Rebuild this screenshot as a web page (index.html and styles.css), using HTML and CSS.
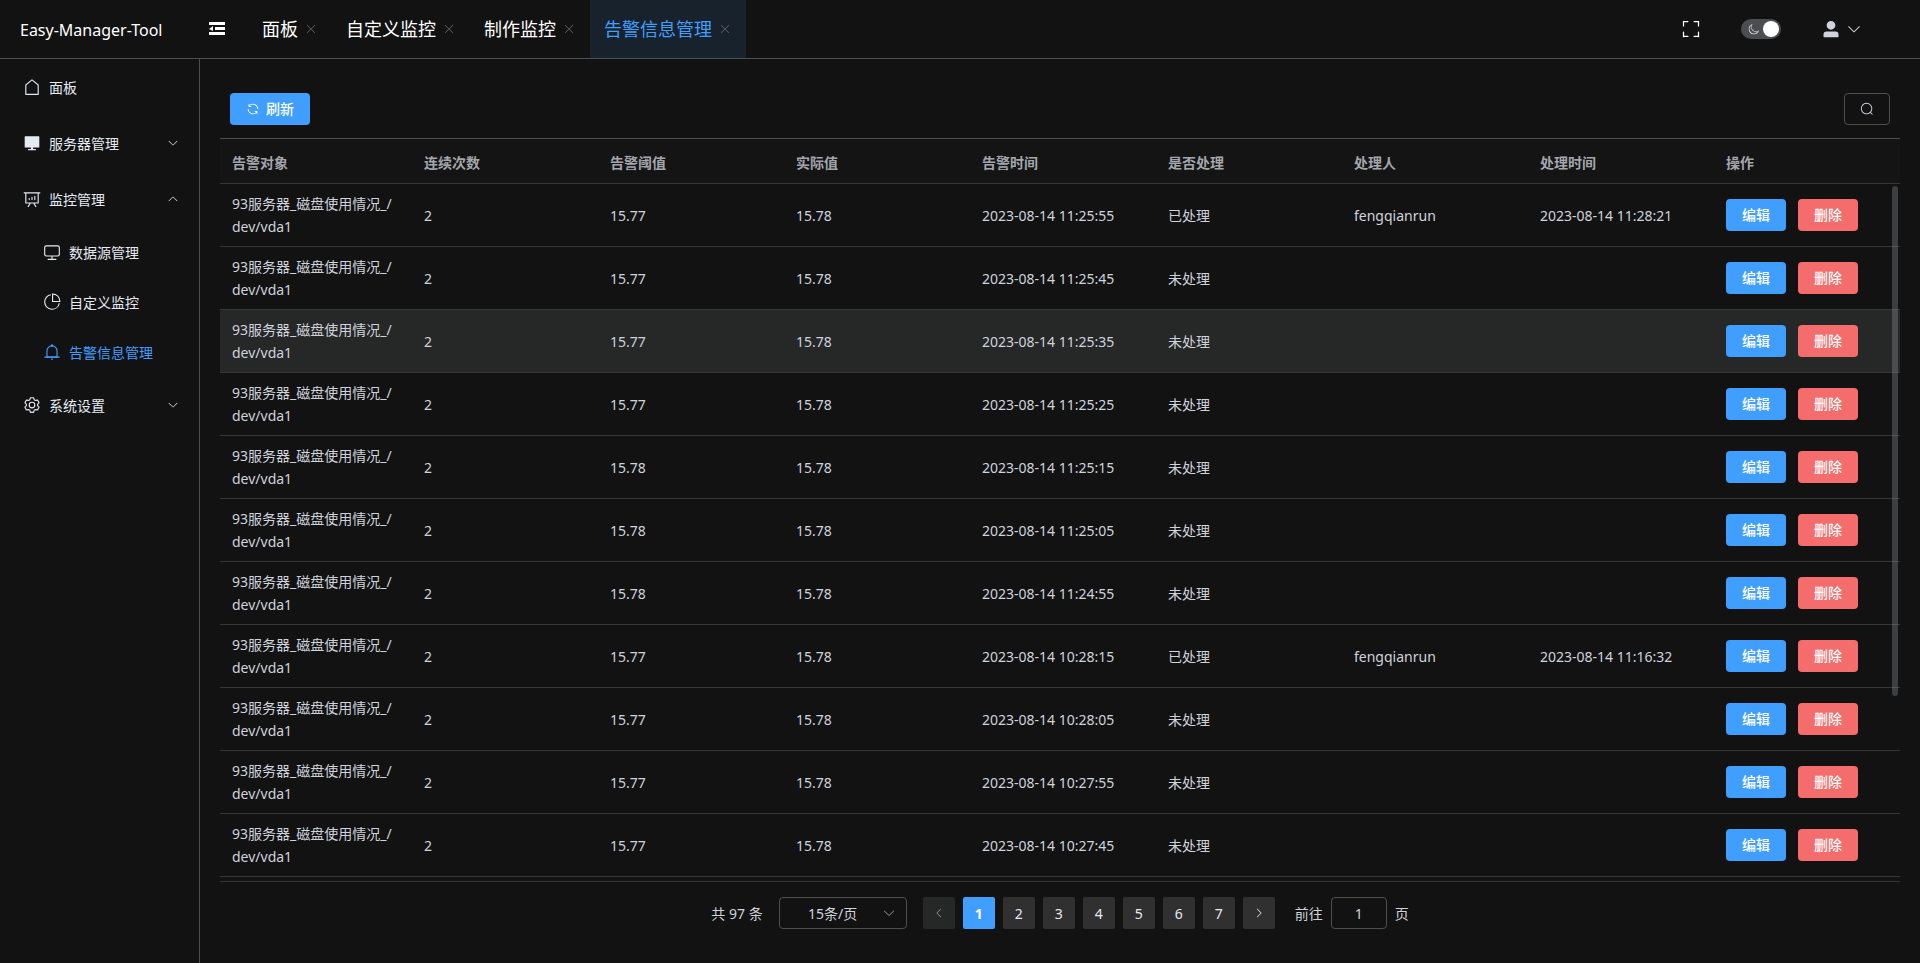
FILE: index.html
```html
<!DOCTYPE html>
<html lang="zh-CN">
<head>
<meta charset="utf-8">
<title>Easy-Manager-Tool</title>
<link rel="stylesheet" href="styles.css">
</head>
<body>
<svg class="sprite" aria-hidden="true">
  <symbol id="i-house" viewBox="0 0 1024 1024"><path d="M192 413.952V896h640V413.952L512 147.328 192 413.952zM139.52 374.4l352-293.312a32 32 0 0 1 40.96 0l352 293.312A32 32 0 0 1 896 398.976V928a32 32 0 0 1-32 32H160a32 32 0 0 1-32-32V398.976a32 32 0 0 1 11.52-24.576z"/></symbol>
  <symbol id="i-server" viewBox="0 0 1024 1024"><path d="M128 128h768a32 32 0 0 1 32 32v576a32 32 0 0 1-32 32H576v80h128a32 32 0 0 1 0 80H320a32 32 0 0 1 0-80h128v-80H128a32 32 0 0 1-32-32V160a32 32 0 0 1 32-32z"/></symbol>
  <symbol id="i-board" viewBox="0 0 1024 1024"><path d="M665.216 768l110.848 192h-73.856L591.36 768H433.024L322.176 960H248.32l110.848-192H160a32 32 0 0 1-32-32V192H64a32 32 0 0 1 0-64h896a32 32 0 1 1 0 64h-64v544a32 32 0 0 1-32 32H665.216zM832 192H192v512h640V192zM352 448a32 32 0 0 1 32 32v64a32 32 0 0 1-64 0v-64a32 32 0 0 1 32-32zm160-64a32 32 0 0 1 32 32v128a32 32 0 0 1-64 0V416a32 32 0 0 1 32-32zm160-64a32 32 0 0 1 32 32v192a32 32 0 1 1-64 0V352a32 32 0 0 1 32-32z"/></symbol>
  <symbol id="i-monitor" viewBox="0 0 1024 1024"><path d="M544 768v128h192a32 32 0 1 1 0 64H288a32 32 0 1 1 0-64h192V768H192A128 128 0 0 1 64 640V256a128 128 0 0 1 128-128h640a128 128 0 0 1 128 128v384a128 128 0 0 1-128 128H544zM192 192a64 64 0 0 0-64 64v384a64 64 0 0 0 64 64h640a64 64 0 0 0 64-64V256a64 64 0 0 0-64-64H192z"/></symbol>
  <symbol id="i-pie" viewBox="0 0 1024 1024"><path d="M448 68.48v64.832A384.128 384.128 0 0 0 512 896a384.128 384.128 0 0 0 378.688-320h64.768A448.128 448.128 0 0 1 64 512 448.128 448.128 0 0 1 448 68.48z"/><path d="M576 97.28V448h350.72A384.064 384.064 0 0 0 576 97.28zM512 64V33.152A448 448 0 0 1 990.848 512H512V64z"/></symbol>
  <symbol id="i-bell" viewBox="0 0 1024 1024"><path d="M512 64a64 64 0 0 1 64 64v64H448v-64a64 64 0 0 1 64-64z"/><path d="M256 768h512V448a256 256 0 1 0-512 0v320zm256-640a320 320 0 0 1 320 320v384H192V448a320 320 0 0 1 320-320z"/><path d="M96 768h832q32 0 32 32t-32 32H96q-32 0-32-32t32-32zm352 128h128a64 64 0 0 1-128 0z"/></symbol>
  <symbol id="i-setting" viewBox="0 0 1024 1024"><path d="M600.704 64a32 32 0 0 1 30.464 22.208l35.2 109.376c14.784 7.232 28.928 15.36 42.432 24.512l112.384-24.192a32 32 0 0 1 34.432 15.36L944.32 364.8a32 32 0 0 1-4.032 37.504l-77.12 85.12a357.12 357.12 0 0 1 0 49.024l77.12 85.248a32 32 0 0 1 4.032 37.504l-88.704 153.6a32 32 0 0 1-34.432 15.296L708.8 803.904c-13.44 9.088-27.648 17.28-42.368 24.512l-35.264 109.376A32 32 0 0 1 600.704 960H423.296a32 32 0 0 1-30.464-22.208L357.696 828.48a351.616 351.616 0 0 1-42.56-24.64l-112.32 24.256a32 32 0 0 1-34.432-15.36L79.68 659.2a32 32 0 0 1 4.032-37.504l77.12-85.248a357.12 357.12 0 0 1 0-48.896l-77.12-85.248A32 32 0 0 1 79.68 364.8l88.704-153.6a32 32 0 0 1 34.432-15.296l112.32 24.256c13.568-9.152 27.776-17.408 42.56-24.64l35.2-109.312A32 32 0 0 1 423.232 64H600.64zm-23.424 64H446.72l-36.352 113.088-24.512 11.968a294.113 294.113 0 0 0-34.816 20.096l-22.656 15.36-116.224-25.088-65.28 113.152 79.68 88.192-1.92 27.136a293.12 293.12 0 0 0 0 40.192l1.92 27.136-79.808 88.192 65.344 113.152 116.224-25.024 22.656 15.296a294.113 294.113 0 0 0 34.816 20.096l24.512 11.968L446.72 896h130.688l36.48-113.152 24.448-11.904a288.282 288.282 0 0 0 34.752-20.096l22.592-15.296 116.288 25.024 65.28-113.152-79.744-88.192 1.92-27.136a293.12 293.12 0 0 0 0-40.256l-1.92-27.136 79.808-88.128-65.344-113.152-116.288 24.96-22.592-15.232a287.616 287.616 0 0 0-34.752-20.096l-24.448-11.904L577.344 128zM512 320a192 192 0 1 1 0 384 192 192 0 0 1 0-384zm0 64a128 128 0 1 0 0 256 128 128 0 0 0 0-256z"/></symbol>
  <symbol id="i-down" viewBox="0 0 1024 1024"><path d="M831.872 340.864 512 652.672 192.128 340.864a30.592 30.592 0 0 0-42.752 0 29.12 29.12 0 0 0 0 41.6L489.664 714.24a32 32 0 0 0 44.672 0l340.288-331.712a29.12 29.12 0 0 0 0-41.728 30.592 30.592 0 0 0-42.752 0z"/></symbol>
  <symbol id="i-close" viewBox="0 0 1024 1024"><path d="M764.288 214.592 512 466.88 259.712 214.592a31.936 31.936 0 0 0-45.12 45.12L466.752 512 214.528 764.224a31.936 31.936 0 1 0 45.12 45.184L512 557.184l252.288 252.288a31.936 31.936 0 0 0 45.12-45.12L557.12 512.064l252.288-252.352a31.936 31.936 0 1 0-45.12-45.184z"/></symbol>
  <symbol id="i-refresh" viewBox="0 0 1024 1024"><path d="M771.776 794.88A384 384 0 0 1 128 512h64a320 320 0 0 0 555.712 216.448H654.72a32 32 0 1 1 0-64h149.056a32 32 0 0 1 32 32v148.928a32 32 0 1 1-64 0v-50.56zM276.288 295.616h92.992a32 32 0 0 1 0 64H220.16a32 32 0 0 1-32-32V178.56a32 32 0 0 1 64 0v50.56A384 384 0 0 1 896.128 512h-64a320 320 0 0 0-555.776-216.384z"/></symbol>
  <symbol id="i-search" viewBox="0 0 1024 1024"><path d="m795.904 750.72 124.992 124.928a32 32 0 0 1-45.248 45.248L750.656 795.904a416 416 0 1 1 45.248-45.248zM480 832a352 352 0 1 0 0-704 352 352 0 0 0 0 704z"/></symbol>
  <symbol id="i-full" viewBox="0 0 1024 1024"><path d="m160 96.064 192 .192a32 32 0 0 1 0 64l-192-.192V352a32 32 0 0 1-64 0V96h64v.064zm0 831.872V928H96V672a32 32 0 1 1 64 0v191.936l192-.192a32 32 0 1 1 0 64l-192 .192zM864 96.064V96h64v256a32 32 0 1 1-64 0V160.064l-192 .192a32 32 0 1 1 0-64l192-.192zm0 831.872-192-.192a32 32 0 0 1 0-64l192 .192V672a32 32 0 1 1 64 0v256h-64v-.064z"/></symbol>
  <symbol id="i-moon" viewBox="0 0 1024 1024"><path d="M240.448 240.448a384 384 0 1 0 559.424 525.696 448 448 0 0 1-542.016-542.08 390.592 390.592 0 0 0-17.408 16.384zm181.056 362.048a384 384 0 0 0 525.632 16.384A448 448 0 1 1 405.056 76.8a384 384 0 0 0 16.448 525.696z"/></symbol>
  <symbol id="i-user" viewBox="0 0 1024 1024"><path d="M288 320a224 224 0 1 0 448 0 224 224 0 1 0-448 0zm544 608H160a32 32 0 0 1-32-32v-96a160 160 0 0 1 160-160h448a160 160 0 0 1 160 160v96a32 32 0 0 1-32 32z"/></symbol>
  <symbol id="i-fold" viewBox="0 0 16 16"><path d="M0 1h16v3H0zM6 6h10v3H6zM0 11h16v3H0zM0 8l4-3v5z"/></symbol>
</svg>

<header class="topbar">
  <h1 class="brand">Easy-Manager-Tool</h1>
  <button class="icon-btn fold" aria-label="折叠菜单"><svg class="s16"><use href="#i-fold"/></svg></button>
  <nav class="tabs">
    <div class="tab"><a href="#">面板</a><button class="icon-btn close" aria-label="关闭"><svg class="s14"><use href="#i-close"/></svg></button></div>
    <div class="tab"><a href="#">自定义监控</a><button class="icon-btn close" aria-label="关闭"><svg class="s14"><use href="#i-close"/></svg></button></div>
    <div class="tab"><a href="#">制作监控</a><button class="icon-btn close" aria-label="关闭"><svg class="s14"><use href="#i-close"/></svg></button></div>
    <div class="tab active"><a href="#">告警信息管理</a><button class="icon-btn close" aria-label="关闭"><svg class="s14"><use href="#i-close"/></svg></button></div>
  </nav>
  <div class="tools">
    <button class="icon-btn bright" aria-label="全屏"><svg class="s20"><use href="#i-full"/></svg></button>
    <label class="switch"><input type="checkbox" role="switch" aria-label="深色模式" checked><svg class="s12"><use href="#i-moon"/></svg></label>
    <button class="icon-btn user" aria-label="用户"><svg class="s20"><use href="#i-user"/></svg><svg class="s16"><use href="#i-down"/></svg></button>
  </div>
</header>

<div class="layout">
  <nav class="sidebar">
    <a class="item" href="#"><svg class="s18"><use href="#i-house"/></svg>面板</a>
    <button class="item"><svg class="s18"><use href="#i-server"/></svg>服务器管理<svg class="s12 arrow"><use href="#i-down"/></svg></button>
    <button class="item"><svg class="s18"><use href="#i-board"/></svg>监控管理<svg class="s12 arrow up"><use href="#i-down"/></svg></button>
    <a class="item sub" href="#"><svg class="s18"><use href="#i-monitor"/></svg>数据源管理</a>
    <a class="item sub" href="#"><svg class="s18"><use href="#i-pie"/></svg>自定义监控</a>
    <a class="item sub current" href="#"><svg class="s18"><use href="#i-bell"/></svg>告警信息管理</a>
    <button class="item"><svg class="s18"><use href="#i-setting"/></svg>系统设置<svg class="s12 arrow"><use href="#i-down"/></svg></button>
  </nav>

  <main class="main">
    <div class="toolbar">
      <button class="btn primary refresh"><svg class="s14"><use href="#i-refresh"/></svg>刷新</button>
      <button class="btn plain" aria-label="搜索"><svg class="s14"><use href="#i-search"/></svg></button>
    </div>
    <div class="table-wrap">
      <table class="grid">
        <colgroup><col class="col-target"><col span="8"></colgroup>
        <thead><tr><th>告警对象</th><th>连续次数</th><th>告警阈值</th><th>实际值</th><th>告警时间</th><th>是否处理</th><th>处理人</th><th>处理时间</th><th>操作</th></tr></thead>
        <tbody id="rows"></tbody>
      </table>
      <div class="scroll-thumb"></div>
    </div>
    <div class="pager">
      <span class="total">共 97 条</span>
      <label class="size"><select aria-label="每页条数"><option>15条/页</option></select><svg class="s14"><use href="#i-down"/></svg></label>
      <div class="pages">
        <button class="page disabled" disabled aria-label="上一页"><svg class="s12 left"><use href="#i-down"/></svg></button>
        <button class="page on">1</button>
        <button class="page">2</button>
        <button class="page">3</button>
        <button class="page">4</button>
        <button class="page">5</button>
        <button class="page">6</button>
        <button class="page">7</button>
        <button class="page" aria-label="下一页"><svg class="s12 right"><use href="#i-down"/></svg></button>
      </div>
      <label class="jump">前往<input type="text" value="1">页</label>
    </div>
  </main>
</div>
<script src="rows.js"></script>
</body>
</html>
```
FILE: rows.js
```js
const rows = [
  ["15.77", "11:25:55", "fengqianrun", "2023-08-14 11:28:21"],
  ["15.77", "11:25:45"],
  ["15.77", "11:25:35"],
  ["15.77", "11:25:25"],
  ["15.78", "11:25:15"],
  ["15.78", "11:25:05"],
  ["15.78", "11:24:55"],
  ["15.77", "10:28:15", "fengqianrun", "2023-08-14 11:16:32"],
  ["15.77", "10:28:05"],
  ["15.77", "10:27:55"],
  ["15.77", "10:27:45"]
];
const highlighted = 2;

document.getElementById("rows").innerHTML = rows.map(([limit, time, user = "", handled = ""], i) => `
  <tr${i === highlighted ? ' class="hover"' : ""}>
    <td>93服务器_磁盘使用情况_/<wbr>dev/vda1</td>
    <td>2</td><td>${limit}</td><td>15.78</td>
    <td>2023-08-14 ${time}</td><td>${user ? "已处理" : "未处理"}</td>
    <td>${user}</td><td>${handled}</td>
    <td><div class="actions"><button class="btn primary">编辑</button><button class="btn danger">删除</button></div></td>
  </tr>`).join("");
```
FILE: styles.css
```css
* { box-sizing: border-box; }

body {
  margin: 0;
  height: 100vh;
  display: flex;
  flex-direction: column;
  overflow: hidden;
  background: #121212;
  color: #cfd3dc;
  font: 14px/23px "Noto Sans", "Noto Sans CJK SC", sans-serif;
}

button, input, select { font: inherit; color: inherit; }
button { border: 0; padding: 0; background: none; cursor: pointer; }
a { color: inherit; text-decoration: none; }
svg { display: block; flex: none; fill: currentColor; }

.sprite { display: none; }
.s12 { width: 12px; height: 12px; }
.s14 { width: 14px; height: 14px; }
.s16 { width: 16px; height: 16px; }
.s18 { width: 18px; height: 18px; }
.s20 { width: 20px; height: 20px; }

.topbar {
  flex: none;
  display: flex;
  align-items: stretch;
  height: 59px;
  border-bottom: 1px solid #4c4d4f;
  color: #fff;
}
.brand {
  width: 209px;
  margin: 0;
  padding-left: 20px;
  font-size: 16px;
  font-weight: 400;
  line-height: 60px;
}
.icon-btn { display: flex; align-items: center; }
.fold { margin-right: 23px; }

.tabs { display: flex; font-size: 18px; line-height: 24px; }
.tab { display: flex; align-items: center; gap: 6px; padding: 0 14px; }
.tab.active { background: #18222c; color: #409eff; }
.close { color: #5c5d60; }

.tools { display: flex; align-items: center; gap: 40px; margin-left: auto; padding-right: 58px; }
.user { gap: 5px; color: #cfd3dc; }
.switch {
  display: flex;
  align-items: center;
  flex-direction: row-reverse;
  justify-content: space-between;
  width: 40px;
  height: 20px;
  padding: 0 2px 0 7px;
  border-radius: 10px;
  background: #4c4d4f;
  color: #cfd3dc;
}
.switch input {
  appearance: none;
  width: 16px;
  height: 16px;
  margin: 0;
  border-radius: 50%;
  background: #fff;
}

.layout { flex: 1; display: flex; min-height: 0; }

.sidebar {
  flex: none;
  width: 200px;
  border-right: 1px solid #4c4d4f;
  color: #e5eaf3;
  line-height: 21px;
}
.item {
  display: flex;
  align-items: center;
  gap: 8px;
  width: 100%;
  height: 56px;
  padding: 0 20px 0 23px;
  text-align: left;
}
.sub { height: 50px; padding-left: 43px; }
.current { color: #409eff; }
.arrow { margin-left: auto; }
.up { transform: rotate(180deg); }
.left { transform: rotate(90deg); }
.right { transform: rotate(-90deg); }

.main {
  flex: 1;
  display: flex;
  flex-direction: column;
  min-width: 0;
  padding: 20px 20px 34px;
}
.toolbar {
  display: flex;
  justify-content: space-between;
  padding: 14px 10px 13px;
}
.btn {
  display: flex;
  align-items: center;
  justify-content: center;
  height: 32px;
  padding: 0 16px;
  border-radius: 4px;
  color: #fff;
  font-weight: 500;
  line-height: 20px;
}
.refresh { gap: 6px; }
.primary { background: #409eff; }
.danger { background: #f56c6c; }
.plain { width: 46px; border: 1px solid #4c4d4f; color: #cfd3dc; }

.table-wrap {
  position: relative;
  flex: 1;
  min-height: 0;
  overflow: hidden;
  border-top: 1px solid #4c4d4f;
  border-bottom: 1px solid #363637;
}
.grid { width: 100%; table-layout: fixed; border-collapse: separate; border-spacing: 0; }
.col-target { width: 192px; }
.grid th, .grid td {
  padding: 8px 12px;
  border-bottom: 1px solid #363637;
  text-align: left;
}
.grid th { height: 45px; padding-top: 11px; background: #141414; color: #a3a6ad; font-weight: 600; }
.hover { background: #262727; }
.actions { display: flex; gap: 12px; }
.scroll-thumb {
  position: absolute;
  top: 47px;
  right: 2px;
  width: 6px;
  height: 510px;
  border-radius: 3px;
  background: #a3a6ad;
  opacity: 0.3;
}

.pager {
  display: flex;
  align-items: center;
  justify-content: center;
  gap: 16px;
  padding-top: 15px;
  line-height: 21px;
}
.size { position: relative; display: flex; align-items: center; }
.size select {
  appearance: none;
  width: 128px;
  height: 32px;
  padding: 0 32px 0 12px;
  border: 1px solid #4c4d4f;
  border-radius: 4px;
  background: transparent;
  text-align: center;
  text-align-last: center;
}
.size svg { position: absolute; right: 11px; color: #8d9095; }
.pages { display: flex; gap: 8px; }
.page {
  display: grid;
  place-items: center;
  width: 32px;
  height: 32px;
  border-radius: 2px;
  background: #303030;
  color: #e5eaf3;
}
.page.on { background: #409eff; color: #fff; font-weight: 700; }
.page.disabled { background: #262727; color: #8d9095; }
.jump { display: flex; align-items: center; gap: 8px; margin-left: 4px; }
.jump input {
  width: 56px;
  height: 32px;
  border: 1px solid #4c4d4f;
  border-radius: 4px;
  background: transparent;
  text-align: center;
}
```
